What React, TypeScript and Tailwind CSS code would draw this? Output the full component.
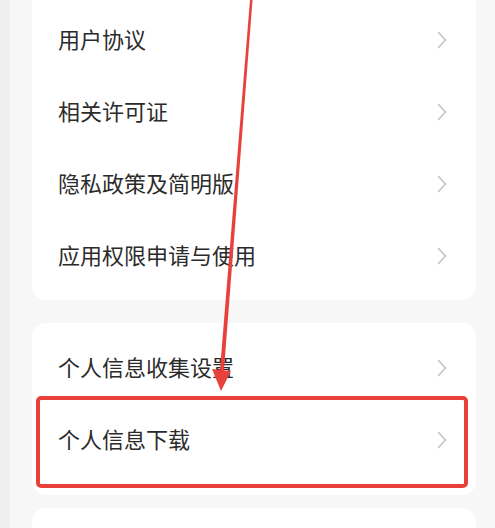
import React from "react";

const Chevron = () => (
  <svg width="10" height="18" viewBox="0 0 10 18" fill="none" className="shrink-0">
    <polyline points="1.5,1.5 8.5,9 1.5,16.5" stroke="#c2c2c2" strokeWidth="1.6" strokeLinecap="round" strokeLinejoin="round" />
  </svg>
);

const Row = ({ label }: { label: string }) => (
  <div className="flex h-[72px] items-center justify-between pl-[26px] pr-[29px]">
    <span className="-mt-[4px] text-[22px] leading-none text-[#2b2b2b]">{label}</span>
    <Chevron />
  </div>
);

export default function App() {
  return (
    <div
      className="relative h-[528px] w-[495px] overflow-hidden border-l-[10px] border-[#efefef] bg-[#f7f7f7]"
      style={{ fontFamily: '"Noto Sans CJK SC", "Noto Sans", sans-serif' }}
    >
      <div className="flex flex-col pl-[22px] pr-[19px]">
        <div className="mt-[-20px] rounded-[14px] bg-white pt-[24px] pb-[8px]">
          <Row label="用户协议" />
          <Row label="相关许可证" />
          <Row label="隐私政策及简明版" />
          <Row label="应用权限申请与使用" />
        </div>
        <div className="mt-[23px] rounded-[14px] bg-white pt-[9px] pb-[19px]">
          <Row label="个人信息收集设置" />
          <Row label="个人信息下载" />
        </div>
        <div className="mt-[13px] h-[80px] rounded-[14px] bg-white" />
      </div>

      <div className="absolute left-[26px] top-[396px] h-[92px] w-[432px] rounded-[5px] border-[4px] border-[#e8403a]" />

      <svg className="absolute left-[-10px] top-0" width="495" height="528" viewBox="0 0 495 528">
        <polygon points="250,0 252.5,0 223.5,376 219.5,376" fill="#e8403a" />
        <polygon points="212,369 231,371 221,391" fill="#e8403a" />
      </svg>
    </div>
  );
}
